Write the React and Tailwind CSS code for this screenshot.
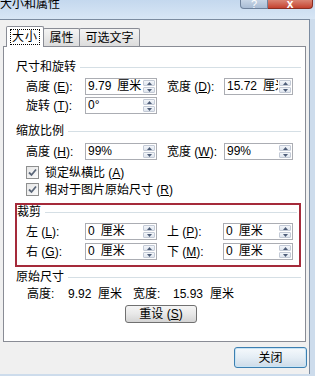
import React from "react";

const F = "font-['Liberation_Sans','Noto_Sans_CJK_SC',sans-serif]";

function U({ children }) {
  return <span className="underline underline-offset-[1px]">{children}</span>;
}

function Spin() {
  return (
    <div className="flex flex-col w-[14px] h-full p-[1px] gap-[1px] bg-white">
      <div className="flex-1 flex items-center justify-center bg-gradient-to-b from-[#f3f6fa] to-[#dfe5ee] border border-[#c3cad6] rounded-[1px]">
        <svg width="5" height="3" viewBox="0 0 5 3">
          <path d="M2.5 0 L5 3 L0 3Z" fill="#4e5d78" />
        </svg>
      </div>
      <div className="flex-1 flex items-center justify-center bg-gradient-to-b from-[#f3f6fa] to-[#dfe5ee] border border-[#c3cad6] rounded-[1px]">
        <svg width="5" height="3" viewBox="0 0 5 3">
          <path d="M0 0 L5 0 L2.5 3Z" fill="#4e5d78" />
        </svg>
      </div>
    </div>
  );
}

function Field({ value, w }) {
  return (
    <div className={`flex h-[17px] ${w} border border-[#abadb3] bg-white`}>
      <div className="flex-1 overflow-hidden whitespace-pre pl-[2px] text-[12px] leading-[15px]">
        {value}
      </div>
      <Spin />
    </div>
  );
}

function Header({ text, ml, mr }) {
  return (
    <div className={`flex items-center h-[14px] ${ml} ${mr}`}>
      <span className="text-[12px] leading-[14px] whitespace-nowrap">{text}</span>
      <div className="flex-1 ml-[4px] h-px bg-[#d5dfe5]" />
    </div>
  );
}

function Check({ children }) {
  return (
    <div className="flex items-center h-[17px] ml-[22px]">
      <div className="w-[13px] h-[13px] border border-[#8e8f8f] bg-gradient-to-br from-[#e6e6e6] to-[#fbfbfb] flex items-center justify-center">
        <svg width="9" height="9" viewBox="0 0 9 9">
          <path d="M1 4.5 L3.5 7 L8 1.5" stroke="#5a6678" strokeWidth="1.8" fill="none" />
        </svg>
      </div>
      <span className="ml-[6px] text-[12px] leading-[14px] whitespace-nowrap">{children}</span>
    </div>
  );
}

export default function App() {
  return (
    <div className={`${F} w-[315px] h-[376px] overflow-hidden bg-[#cddcec] text-black flex flex-col`}>
      {/* title bar */}
      <div className="h-[19px] flex items-start bg-gradient-to-b from-[#c4d8ee] to-[#d8e6f5]">
        <span className="text-[12px] leading-[14px] -mt-[3px] whitespace-nowrap">大小和属性</span>
        <div className="ml-auto flex mr-[2px]">
          <div className="w-[28px] h-[9px] border border-t-0 border-[#6f829c] rounded-bl-[4px] bg-gradient-to-b from-[#c7d5e6] to-[#a9bcd4] flex items-end justify-center overflow-hidden">
            <span className="text-[11px] leading-[9px] text-white -mb-[1px]">?</span>
          </div>
          <div className="w-[45px] h-[9px] border border-t-0 border-l-0 border-[#8a2e22] rounded-br-[4px] bg-gradient-to-b from-[#d98373] to-[#c4412f] flex items-end justify-center overflow-hidden">
            <span className="text-[12px] leading-[9px] text-white font-bold -mb-[1px]">x</span>
          </div>
        </div>
      </div>

      {/* client area */}
      <div className="w-[310px] h-[355px] border-t border-r border-[#7b8ba0] bg-[#f0f0f0] flex flex-col">
        {/* tabs */}
        <div className="flex items-end ml-[6px] mt-[6px] h-[21px] relative z-10">
          <div className="w-[38px] h-[21px] bg-white border border-b-0 border-[#898c95] rounded-t-[2px] flex items-start justify-center pt-[2px]">
            <div className="border border-dotted border-black px-[1px] h-[16px] flex items-center">
              <span className="text-[12px] leading-[14px] tracking-[1px]">大小</span>
            </div>
          </div>
          <div className="w-[37px] h-[18px] mb-[1px] -ml-px bg-gradient-to-b from-[#f4f4f4] to-[#dcdcdc] border border-b-0 border-[#898c95] rounded-t-[2px] flex items-center justify-center">
            <span className="text-[12px] leading-[14px]">属性</span>
          </div>
          <div className="w-[61px] h-[18px] mb-[1px] -ml-px bg-gradient-to-b from-[#f4f4f4] to-[#dcdcdc] border border-b-0 border-[#898c95] rounded-t-[2px] flex items-center justify-center">
            <span className="text-[12px] leading-[14px]">可选文字</span>
          </div>
        </div>

        {/* panel */}
        <div className="ml-[3px] -mt-px w-[303px] h-[296px] bg-white border border-[#898c95] flex flex-col text-[12px] leading-[14px]">
          <div className="mt-[13px]">
            <Header text="尺寸和旋转" ml="ml-[12px]" mr="mr-[4px]" />
          </div>
          <div className="flex items-center h-[17px] mt-[4px]">
            <span className="ml-[22px] w-[59px] whitespace-nowrap">高度 (<U>E</U>):</span>
            <Field value={"9.79\u2002厘米"} w="w-[72px]" />
            <span className="ml-[10px] w-[57px] whitespace-nowrap">宽度 (<U>D</U>):</span>
            <Field value={"15.72\u2002厘米"} w="w-[69px]" />
          </div>
          <div className="flex items-center h-[17px] mt-[2px]">
            <span className="ml-[22px] w-[59px] whitespace-nowrap">旋转 (<U>T</U>):</span>
            <Field value="0°" w="w-[72px]" />
          </div>

          <div className="mt-[10px]">
            <Header text="缩放比例" ml="ml-[12px]" mr="mr-[4px]" />
          </div>
          <div className="flex items-center h-[17px] mt-[5px]">
            <span className="ml-[22px] w-[59px] whitespace-nowrap">高度 (<U>H</U>):</span>
            <Field value="99%" w="w-[72px]" />
            <span className="ml-[10px] w-[57px] whitespace-nowrap">宽度 (<U>W</U>):</span>
            <Field value="99%" w="w-[69px]" />
          </div>
          <div className="mt-[4px]">
            <Check>锁定纵横比 (<U>A</U>)</Check>
            <Check>相对于图片原始尺寸 (<U>R</U>)</Check>
          </div>

          {/* red crop box */}
          <div className="ml-[11px] mt-[5px] w-[286px] h-[64px] border-2 border-[#a52a3a] flex flex-col">
            <Header text="裁剪" ml="ml-0" mr="mr-[2px]" />
            <div className="flex items-center h-[17px] mt-[4px]">
              <span className="ml-[9px] w-[59px] whitespace-nowrap">左 (<U>L</U>):</span>
              <Field value={"0\u2002厘米"} w="w-[72px]" />
              <span className="ml-[10px] w-[56px] whitespace-nowrap">上 (<U>P</U>):</span>
              <Field value={"0\u2002厘米"} w="w-[70px]" />
            </div>
            <div className="flex items-center h-[17px] mt-[3px]">
              <span className="ml-[9px] w-[59px] whitespace-nowrap">右 (<U>G</U>):</span>
              <Field value={"0\u2002厘米"} w="w-[72px]" />
              <span className="ml-[10px] w-[56px] whitespace-nowrap">下 (<U>M</U>):</span>
              <Field value={"0\u2002厘米"} w="w-[70px]" />
            </div>
          </div>

          <div className="mt-[3px]">
            <Header text="原始尺寸" ml="ml-[12px]" mr="mr-[4px]" />
          </div>
          <div className="flex items-center h-[14px] mt-[3px] ml-[23px] whitespace-nowrap">
            <span className="w-[41px]">高度:</span>
            <span className="w-[30px]">9.92</span>
            <span className="w-[35px]">厘米</span>
            <span className="w-[40px]">宽度:</span>
            <span className="w-[37px]">15.93</span>
            <span>厘米</span>
          </div>
          <div className="mt-[4px] ml-[121px] w-[72px] h-[18px] rounded-[3px] border border-[#707070] bg-gradient-to-b from-[#f4f4f4] via-[#e8e8e8] to-[#d4d4d4] flex items-center justify-center">
            <span className="whitespace-nowrap">重设 (<U>S</U>)</span>
          </div>
        </div>

        {/* bottom */}
        <div className="flex justify-end mt-[5px] mr-[2px]">
          <div className="w-[73px] h-[21px] rounded-[3px] border border-[#3c7fb1] bg-gradient-to-b from-[#f5f9fc] via-[#e4edf5] to-[#cddbe8] shadow-[inset_0_0_0_1px_#c8e4f5] flex items-center justify-center">
            <span className="text-[12px] leading-[14px]">关闭</span>
          </div>
        </div>
      </div>
    </div>
  );
}
